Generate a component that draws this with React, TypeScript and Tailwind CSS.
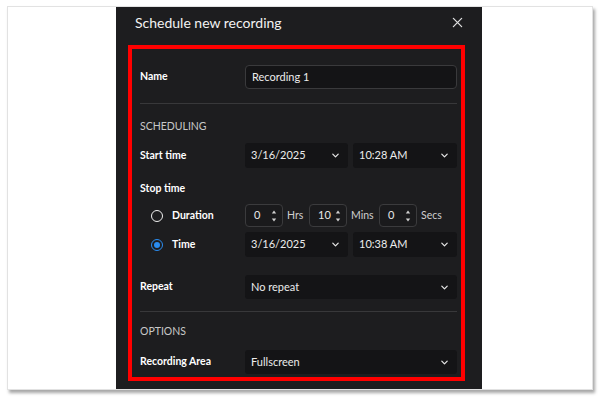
import React from "react";

const font = { fontFamily: "Lato, 'Noto Sans', sans-serif" };

function Chevron() {
  return (
    <svg width="9" height="9" viewBox="0 0 10 10" fill="none" stroke="#e5e5e5" strokeWidth="1.4" strokeLinecap="round" strokeLinejoin="round">
      <path d="M2 3.5 L5 6.5 L8 3.5" />
    </svg>
  );
}

function Select({ value, className }: { value: string; className: string }) {
  return (
    <div className={`flex items-center justify-between bg-[#141416] rounded-[3px] pl-[6px] pr-[8px] text-[11px] text-[#ececec] ${className}`}>
      <span>{value}</span>
      <Chevron />
    </div>
  );
}

function NumBox({ value, unit, unitW }: { value: string; unit: string; unitW: string }) {
  return (
    <div className="flex items-center">
      <div className="flex items-center justify-between w-[38px] h-[23px] border border-[#3b3b3d] rounded-[4px] bg-[#1a1a1c] pl-[8px] pr-[5px]">
        <span className="text-[11px] text-[#e8e8e8]">{value}</span>
        <svg width="6" height="14" viewBox="0 0 6 14" fill="#d0d0d0">
          <path d="M3 1.5 L5.2 4.5 L0.8 4.5 Z" />
          <path d="M3 12.5 L5.2 9.5 L0.8 9.5 Z" />
        </svg>
      </div>
      <span className={`ml-[4px] text-[10.5px] text-[#cfcfcf] ${unitW}`}>{unit}</span>
    </div>
  );
}

export default function App() {
  return (
    <div className="w-[600px] h-[398px] bg-white overflow-hidden" style={font}>
      <div className="ml-[7px] mt-[6px] w-[586px] h-[384px] bg-white border border-[#e2e2e2] shadow-[2px_3px_3px_rgba(0,0,0,0.35)] flex">
        <div className="ml-[108px] w-[366px] h-full bg-[#1d1d1f] flex flex-col">
          <div className="flex items-center justify-between h-[31px] pl-[19px] pr-[19px]">
            <span className="text-[14px] text-[#f2f2f2]">Schedule new recording</span>
            <svg width="11" height="11" viewBox="0 0 12 12" stroke="#e0e0e0" strokeWidth="1.4" strokeLinecap="round">
              <path d="M1.5 1.5 L10.5 10.5 M10.5 1.5 L1.5 10.5" />
            </svg>
          </div>
          <div className="ml-[12px] mt-[7px] w-[337px] h-[336px] border-[4px] border-[#ff0000] pl-[8px] pr-[4px] pt-[16px]">
            {/* Name */}
            <div className="flex items-center h-[24px]">
              <span className="w-[105px] text-[10.5px] font-bold text-white">Name</span>
              <div className="flex items-center w-[212px] h-[24px] bg-[#141416] border border-[#3a3a3c] rounded-[4px] pl-[6px] text-[11px] text-[#ececec]">
                Recording 1
              </div>
            </div>
            <div className="mt-[14px] h-px bg-[#38383a]" />
            <div className="mt-[15px] text-[10.5px] text-[#c8c8c8] leading-[14px]">SCHEDULING</div>
            {/* Start time */}
            <div className="mt-[10px] flex items-center h-[25px]">
              <span className="w-[105px] text-[10.5px] font-bold text-white">Start time</span>
              <Select value="3/16/2025" className="w-[103px] h-[25px]" />
              <Select value="10:28 AM" className="ml-[5px] w-[104px] h-[25px]" />
            </div>
            <div className="mt-[13px] text-[10.5px] font-bold text-white leading-[14px]">Stop time</div>
            {/* Duration */}
            <div className="mt-[9px] flex items-center h-[23px]">
              <div className="w-[105px] flex items-center pl-[11px]">
                <span className="w-[12px] h-[12px] rounded-full border-[1.5px] border-[#f0f0f0]" />
                <span className="ml-[9px] text-[10.5px] font-bold text-white">Duration</span>
              </div>
              <NumBox value="0" unit="Hrs" unitW="w-[22px]" />
              <NumBox value="10" unit="Mins" unitW="w-[28px]" />
              <NumBox value="0" unit="Secs" unitW="w-[24px]" />
            </div>
            {/* Time */}
            <div className="mt-[5px] flex items-center h-[25px]">
              <div className="w-[105px] flex items-center pl-[11px]">
                <span className="w-[12px] h-[12px] rounded-full border-[1.5px] border-[#2a8cf0] flex items-center justify-center">
                  <span className="w-[6px] h-[6px] rounded-full bg-[#2a8cf0]" />
                </span>
                <span className="ml-[9px] text-[10.5px] font-bold text-white">Time</span>
              </div>
              <Select value="3/16/2025" className="w-[103px] h-[25px]" />
              <Select value="10:38 AM" className="ml-[5px] w-[104px] h-[25px]" />
            </div>
            {/* Repeat */}
            <div className="mt-[18px] flex items-center h-[24px]">
              <span className="w-[105px] text-[10.5px] font-bold text-white">Repeat</span>
              <Select value="No repeat" className="w-[212px] h-[24px]" />
            </div>
            <div className="mt-[12px] h-px bg-[#38383a]" />
            <div className="mt-[12px] text-[10.5px] text-[#c8c8c8] leading-[14px]">OPTIONS</div>
            {/* Recording Area */}
            <div className="mt-[12px] flex items-center h-[24px]">
              <span className="w-[105px] text-[10.5px] font-bold text-white">Recording Area</span>
              <Select value="Fullscreen" className="w-[212px] h-[24px]" />
            </div>
          </div>
        </div>
      </div>
    </div>
  );
}
